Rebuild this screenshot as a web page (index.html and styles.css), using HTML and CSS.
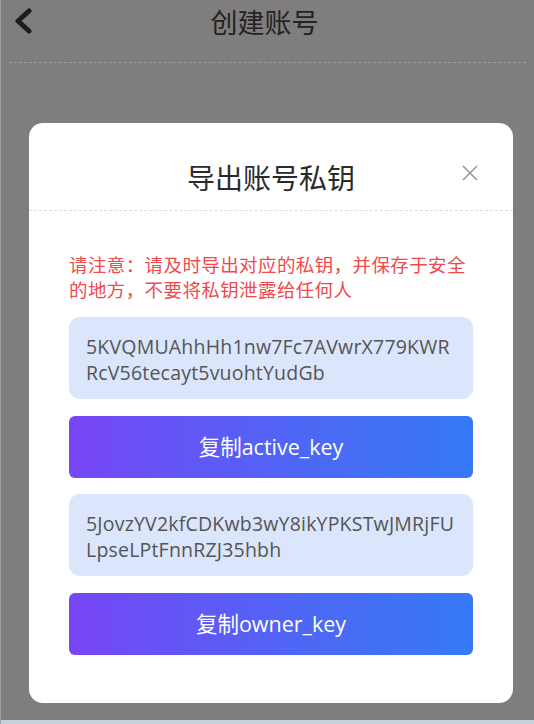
FILE: index.html
```html
<!DOCTYPE html>
<html lang="zh">
<head>
<meta charset="utf-8">
<title>创建账号</title>
<link rel="stylesheet" href="styles.css">
</head>
<body>
<div class="page">
  <header class="topbar">
    <span class="back">
      <svg width="22" height="26" viewBox="0 0 22 26"><path d="M17 3 L6 13 L17 23" fill="none" stroke="#1c1c1c" stroke-width="5" stroke-linecap="round" stroke-linejoin="round"/></svg>
    </span>
    <h1 class="title">创建账号</h1>
  </header>
  <div class="modal">
    <div class="modal-head">
      <h2 class="modal-title">导出账号私钥</h2>
      <span class="close">
        <svg width="18" height="18" viewBox="0 0 18 18"><path d="M2 2 L16 16 M16 2 L2 16" stroke="#9a9a9a" stroke-width="1.6" fill="none"/></svg>
      </span>
    </div>
    <div class="modal-body">
      <p class="warn">请注意：请及时导出对应的私钥，并保存于安全的地方，不要将私钥泄露给任何人</p>
      <div class="key">5KVQMUAhhHh1nw7Fc7AVwrX779KWR<br>RcV56tecayt5vuohtYudGb</div>
      <button class="copy">复制active_key</button>
      <div class="key">5JovzYV2kfCDKwb3wY8ikYPKSTwJMRjFU<br>LpseLPtFnnRZJ35hbh</div>
      <button class="copy">复制owner_key</button>
    </div>
  </div>
  <div class="bottom-line"></div>
</div>
</body>
</html>
```

FILE: styles.css
```css
* { box-sizing: border-box; }
html, body { margin: 0; padding: 0; }
body {
  background: #807d7e;
  font-family: "Noto Sans CJK SC", "Noto Sans", sans-serif;
  width: 534px;
  height: 724px;
  overflow: hidden;
}
.page {
  height: 724px;
  display: flex;
  flex-direction: column;
  border-left: 1px solid #9aa3a8;
}
.topbar {
  height: 63px;
  margin: 0 8px;
  border-bottom: 1px dashed #9c999a;
  display: flex;
  align-items: flex-start;
  justify-content: center;
  position: relative;
}
.back {
  position: absolute;
  left: 3px;
  top: 8px;
  display: flex;
}
.title {
  margin: 0;
  padding-top: 4px;
  font-size: 27px;
  font-weight: 400;
  color: #232323;
  line-height: 36px;
  padding-right: 6px;
}
.modal {
  margin: 60px 0 0 28px;
  width: 484px;
  height: 580px;
  background: #fff;
  border-radius: 14px;
  display: flex;
  flex-direction: column;
}
.modal-head {
  height: 88px;
  border-bottom: 1px dashed #dddddd;
  display: flex;
  align-items: center;
  justify-content: center;
  position: relative;
}
.modal-title {
  margin: 0;
  font-size: 28px;
  font-weight: 400;
  color: #2a2a2a;
  line-height: 40px;
  padding-top: 20px;
}
.close {
  position: absolute;
  right: 34px;
  top: 41px;
  display: flex;
}
.modal-body {
  padding: 41px 40px 0 40px;
  display: flex;
  flex-direction: column;
}
.warn {
  margin: 0 0 15px;
  color: #ef4a4e;
  font-size: 18.5px;
  line-height: 25px;
  letter-spacing: 0.4px;
}
.key {
  background: #dbe5fb;
  border-radius: 11px;
  padding: 17px 4px 15px 17px;
  height: 82px;
  font-family: "Open Sans", "Noto Sans CJK SC", sans-serif;
  font-size: 19.5px;
  line-height: 26px;
  letter-spacing: 0.2px;
  color: #555;
  white-space: nowrap;
  overflow: hidden;
}
.copy {
  margin: 17px 0 16px;
  height: 62px;
  border: none;
  border-radius: 6px;
  background: linear-gradient(90deg, #7845f5 0%, #4f66f5 55%, #3579f6 100%);
  color: #fff;
  font-family: "Open Sans", "Noto Sans CJK SC", sans-serif;
  font-size: 21.5px;
  padding: 0;
  padding-bottom: 4px;
}
.bottom-line {
  margin-top: auto;
  height: 4px;
  background: #c6d2db;
}
```
